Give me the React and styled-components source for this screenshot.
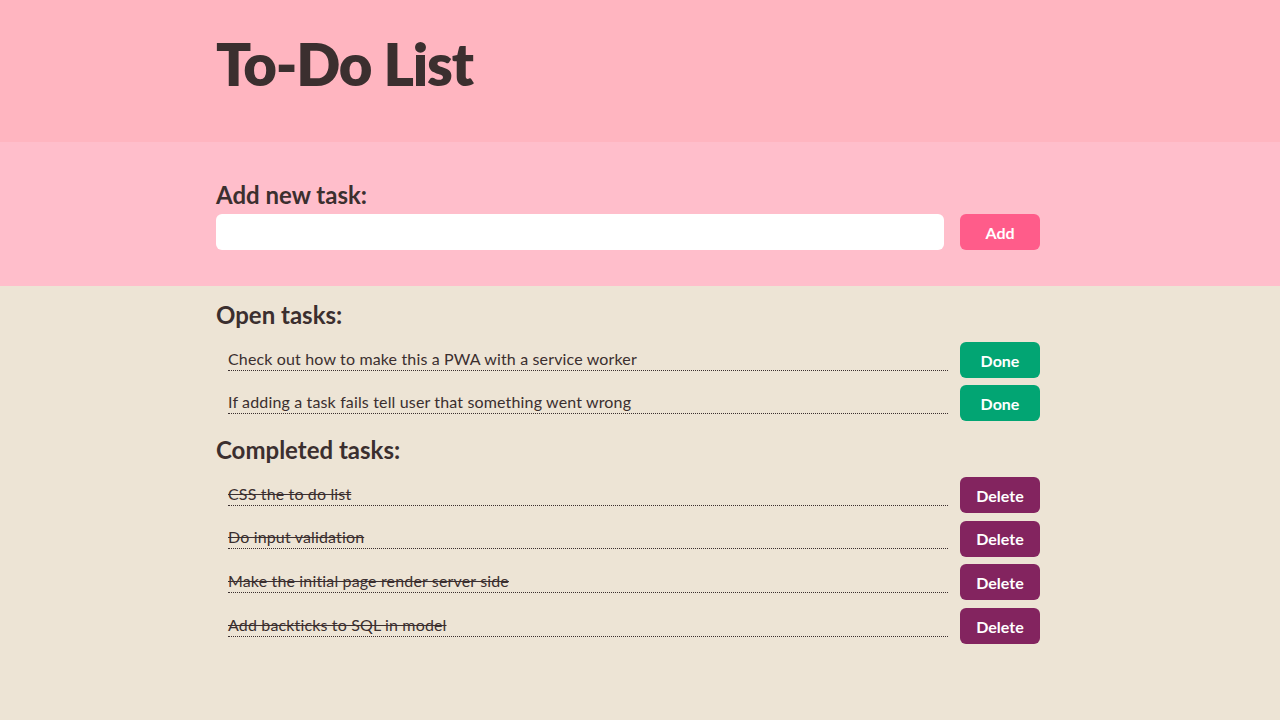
import styled, { createGlobalStyle } from "styled-components";

const GlobalStyle = createGlobalStyle`
  html, body {
    margin: 0;
    padding: 0;
    background: #EDE4D5;
    font-family: 'Lato', 'Noto Sans', sans-serif;
    color: #3B2F2F;
  }
  * { box-sizing: border-box; }
`;

const Band = styled.div`
  background: ${props => props.bg};
  padding: ${props => props.pad};
`;

const Wrap = styled.div`
  width: 848px;
  padding-right: 24px;
  margin: 0 auto;
`;

const Title = styled.h1`
  margin: 0;
  font-size: 58px;
  line-height: 70px;
  font-weight: 800;
  letter-spacing: -1.2px;
  position: relative;
  top: -2px;
`;

const Label = styled.label`
  display: block;
  font-size: 24px;
  line-height: 28px;
  font-weight: 700;
  margin-bottom: 5px;
`;

const FormRow = styled.form`
  display: flex;
  gap: 16px;
`;

const Input = styled.input`
  flex: 1;
  height: 36px;
  border: 0;
  border-radius: 6px;
  background: #fff;
  padding: 0 10px;
  font: inherit;
  font-size: 16px;
  outline: none;
`;

const Button = styled.button`
  width: 80px;
  height: 36px;
  flex: none;
  border: 0;
  border-radius: 6px;
  background: ${props => props.color};
  color: #fff;
  font-family: inherit;
  font-size: 16px;
  font-weight: 700;
  cursor: pointer;
`;

const Heading = styled.h2`
  margin: 0;
  padding-top: 15px;
  margin-bottom: 13px;
  font-size: 24px;
  line-height: 28px;
  font-weight: 700;
`;

const List = styled.ul`
  list-style: none;
  margin: 0;
  padding: 0;
  display: flex;
  flex-direction: column;
  gap: ${props => props.gap};
`;

const Item = styled.li`
  display: flex;
  align-items: center;
  padding-left: 12px;
  height: 36px;
`;

const TaskText = styled.span`
  flex: 1;
  font-size: 16px;
  line-height: 22px;
  letter-spacing: 0.15px;
  border-bottom: 1px dotted #3B2F2F;
  margin-right: 12px;
  position: relative;
  top: -1px;
  text-decoration: ${props => (props.done ? "line-through" : "none")};
`;

const openTasks = [
  "Check out how to make this a PWA with a service worker",
  "If adding a task fails tell user that something went wrong",
];

const doneTasks = [
  "CSS the to do list",
  "Do input validation",
  "Make the initial page render server side",
  "Add backticks to SQL in model",
];

export default function App() {
  return (
    <>
      <GlobalStyle />
      <Band bg="#FFB5C0" pad="31px 0 41px">
        <Wrap>
          <Title>To-Do List</Title>
        </Wrap>
      </Band>
      <Band bg="#FFBECB" pad="39px 0 36px">
        <Wrap>
          <Label htmlFor="task">Add new task:</Label>
          <FormRow onSubmit={e => e.preventDefault()}>
            <Input id="task" type="text" />
            <Button color="#FF5C8A" type="submit">Add</Button>
          </FormRow>
        </Wrap>
      </Band>
      <Wrap>
        <Heading>Open tasks:</Heading>
        <List gap="7px">
          {openTasks.map(t => (
            <Item key={t}>
              <TaskText>{t}</TaskText>
              <Button color="#02A573">Done</Button>
            </Item>
          ))}
        </List>
        <Heading>Completed tasks:</Heading>
        <List gap="7.7px">
          {doneTasks.map(t => (
            <Item key={t}>
              <TaskText done>{t}</TaskText>
              <Button color="#83245F">Delete</Button>
            </Item>
          ))}
        </List>
      </Wrap>
    </>
  );
}
